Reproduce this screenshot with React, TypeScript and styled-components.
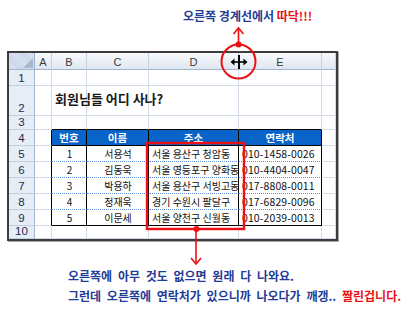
import React from "react";
import styled, { createGlobalStyle, css } from "styled-components";

const GlobalStyle = createGlobalStyle`
  html, body { margin: 0; padding: 0; background: #ffffff; }
  * { box-sizing: border-box; }
`;

const FONT = `"Noto Sans CJK KR", "Noto Sans", "Liberation Sans", sans-serif`;
const BLUE_TEXT = "#1f3c96";
const RED = "#ec0f14";
const GRID = "#d4dbe8";
const HEAD_LINE = "#9eb6ce";

const Page = styled.div`
  position: relative;
  width: 412px;
  height: 310px;
  overflow: hidden;
  background: #ffffff;
  font-family: ${FONT};
`;

const Note = styled.div<{ $indent: number; $top: number; $wordGap: number }>`
  padding-left: ${(p) => p.$indent}px;
  margin-top: ${(p) => p.$top}px;
  font-size: 12px;
  font-weight: 700;
  line-height: 20px;
  word-spacing: ${(p) => p.$wordGap}px;
  color: ${BLUE_TEXT};
  white-space: nowrap;
`;

const Red = styled.span`
  color: ${RED};
`;

const Sheet = styled.div`
  display: grid;
  grid-template-columns: 26px 17px 35px 62px 90px 83px 14px;
  grid-template-rows: 17px 16px 30px 14px 16px 16px 16px 16px 16px 16px 13px;
  width: 331px;
  margin: 25px 0 0 7px;
  border: 2px solid #3c3c3c;
  box-shadow: 1px 1px 0 #a8a8a8;
  background: #ffffff;
`;

type Kind = "corner" | "colHead" | "rowHead" | "plain" | "tableHead" | "tableBody" | "title";

const Cell = styled.div<{
  $kind: Kind;
  $align: "left" | "center";
  $right: string;
  $bottom: string;
}>`
  display: flex;
  align-items: center;
  justify-content: ${(p) => (p.$align === "center" ? "center" : "flex-start")};
  padding: 0 2px;
  overflow: hidden;
  white-space: nowrap;
  border-right: ${(p) => p.$right};
  border-bottom: ${(p) => p.$bottom};
  font-size: 10px;
  color: #000000;
  ${(p) =>
    p.$kind === "colHead" &&
    css`
      background: linear-gradient(#f9fbfd, #dfe6f0);
      font-family: "Liberation Sans", Arial, sans-serif;
      font-size: 11px;
      color: #3a3a3a;
      padding-top: 1px;
    `}
  ${(p) =>
    p.$kind === "rowHead" &&
    css`
      background: #e6edf7;
      font-family: "Liberation Sans", Arial, sans-serif;
      font-size: 11.5px;
      color: #1d2c48;
      align-items: flex-end;
      padding-bottom: 1px;
    `}
  ${(p) =>
    p.$kind === "corner" &&
    css`
      position: relative;
      background: repeating-linear-gradient(45deg, #d9e3f0 0 1px, #c9d6e7 1px 2px);
    `}
  ${(p) =>
    p.$kind === "tableHead" &&
    css`
      background: #0964c9;
      color: #ffffff;
      font-weight: 700;
      font-size: 10.5px;
    `}
  ${(p) =>
    p.$kind === "tableBody" &&
    css`
      font-size: 10px;
      padding-left: 3px;
      color: #111111;
    `}
  ${(p) =>
    p.$kind === "title" &&
    css`
      position: relative;
      z-index: 1;
      overflow: visible;
      align-items: flex-end;
      padding: 0 0 7px 3px;
      font-size: 13px;
      font-weight: 700;
      color: #1a1a1a;
    `}
`;

const Phone = styled.span`
  font-size: 10.5px;
  letter-spacing: 0.1px;
`;

const CornerMark = styled.svg`
  position: absolute;
  right: 1px;
  bottom: 1px;
`;

const Overlay = styled.svg`
  position: absolute;
  left: 0;
  top: 0;
  pointer-events: none;
`;

const letters = ["", "A", "B", "C", "D", "E", ""];

const rows: [string, string, string, string][] = [
  ["1", "서용석", "서울 용산구 청암동", "010-1458-0026"],
  ["2", "김동욱", "서울 영등포구 양화동", "010-4404-0047"],
  ["3", "박용하", "서울 용산구 서빙고동", "017-8808-0011"],
  ["4", "정재욱", "경기 수원시 팔달구", "017-6829-0096"],
  ["5", "이문세", "서울 양천구 신월동", "010-2039-0013"],
];

const headers = ["번호", "이름", "주소", "연락처"];

function cellProps(r: number, c: number) {
  const inTableRows = r >= 4 && r <= 9;
  const inTableCols = c >= 2 && c <= 5;
  let right = `1px solid ${GRID}`;
  let bottom = `1px solid ${GRID}`;
  let kind: Kind = "plain";
  let align: "left" | "center" = "center";
  let content: React.ReactNode = null;

  if (r === 0 && c === 0) {
    kind = "corner";
    right = `1px solid ${HEAD_LINE}`;
    bottom = `1px solid ${HEAD_LINE}`;
  } else if (r === 0) {
    kind = "colHead";
    right = `1px solid #c7d3e3`;
    bottom = `1px solid ${HEAD_LINE}`;
    content = letters[c];
  } else if (c === 0) {
    kind = "rowHead";
    right = `1px solid ${HEAD_LINE}`;
    bottom = `1px solid #c2cfe0`;
    content = String(r);
  } else {
    if (inTableRows && c >= 1 && c <= 5) right = "1px solid #000";
    if (inTableCols) {
      if (r === 3 || r === 4 || r === 9) bottom = "1px solid #000";
      else if (r >= 5 && r <= 8) bottom = "1px dotted #5e95d6";
    }
    if (r === 2 && c === 2) {
      kind = "title";
      align = "left";
      content = "회원님들 어디 사나?";
    } else if (r === 4 && inTableCols) {
      kind = "tableHead";
      content = headers[c - 2];
    } else if (r >= 5 && r <= 9 && inTableCols) {
      const d = rows[r - 5];
      kind = "tableBody";
      if (c === 2) content = d[0];
      if (c === 3) content = d[1];
      if (c === 4) {
        align = "left";
        content = d[2];
      }
      if (c === 5) {
        align = "left";
        content = <Phone>{d[3]}</Phone>;
      }
    }
  }
  return { right, bottom, kind, align, content };
}

export default function App() {
  const cells: React.ReactNode[] = [];
  for (let r = 0; r <= 10; r++) {
    for (let c = 0; c <= 6; c++) {
      const p = cellProps(r, c);
      cells.push(
        <Cell key={`${r}-${c}`} $kind={p.kind} $align={p.align} $right={p.right} $bottom={p.bottom}>
          {p.kind === "corner" ? (
            <CornerMark width="10" height="10" viewBox="0 0 10 10">
              <polygon points="10,0 10,10 0,10" fill="#a9b9cf" />
            </CornerMark>
          ) : (
            p.content
          )}
        </Cell>
      );
    }
  }

  return (
    <Page>
      <GlobalStyle />
      <Note $indent={183} $top={6} $wordGap={0}>
        오른쪽 경계선에서 <Red>따닥!!!</Red>
      </Note>
      <Sheet>{cells}</Sheet>
      <Note $indent={68} $top={25} $wordGap={3}>
        오른쪽에 아무 것도 없으면 원래 다 나와요.
      </Note>
      <Note $indent={68} $top={0} $wordGap={3}>
        그런데 오른쪽에 연락처가 있으니까 나오다가 깨갱.. <Red>짤린겁니다.</Red>
      </Note>
      <Overlay width="412" height="310" viewBox="0 0 412 310">
        <circle cx="238.5" cy="61.5" r="17" fill="none" stroke={RED} strokeWidth="2" />
        <circle cx="238.5" cy="44.5" r="3" fill={RED} />
        <line x1="238.5" y1="44" x2="238.5" y2="28" stroke={RED} strokeWidth="1.6" />
        <polyline points="233.5,34 238.5,28 243.5,34" fill="none" stroke={RED} strokeWidth="1.6" />
        <rect x="238" y="55" width="2" height="14" fill="#000" />
        <line x1="232" y1="62" x2="246" y2="62" stroke="#000" strokeWidth="1.6" />
        <polygon points="230.5,62 234.5,58.5 234.5,65.5" fill="#000" />
        <polygon points="247.5,62 243.5,58.5 243.5,65.5" fill="#000" />
        <rect x="147" y="143" width="97" height="86" fill="none" stroke={RED} strokeWidth="2.4" />
        <circle cx="196.5" cy="229" r="3" fill={RED} />
        <line x1="196" y1="229" x2="196" y2="264" stroke={RED} strokeWidth="1.6" />
        <polyline points="191,258 196,264 201,258" fill="none" stroke={RED} strokeWidth="1.6" />
      </Overlay>
    </Page>
  );
}
